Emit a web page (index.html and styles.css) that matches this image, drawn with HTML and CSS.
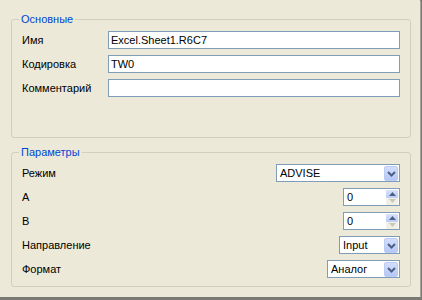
FILE: index.html
```html
<!DOCTYPE html>
<html lang="ru">
<head>
  <meta charset="UTF-8" />
  <title>Свойства тега</title>
  <link rel="stylesheet" href="styles.css">
</head>
<body>
  <div class="panel">
    <fieldset class="group group-main">
      <legend>Основные</legend>
      <div class="form-row">
        <label>Имя</label>
        <input class="text" type="text" value="Excel.Sheet1.R6C7" />
      </div>
      <div class="form-row">
        <label>Кодировка</label>
        <input class="text" type="text" value="TW0" />
      </div>
      <div class="form-row">
        <label>Комментарий</label>
        <input class="text" type="text" value="" />
      </div>
    </fieldset>

    <fieldset class="group group-params">
      <legend>Параметры</legend>
      <div class="param-row">
        <span>Режим</span>
        <div class="combo combo-mode">
          <span class="combo-value">ADVISE</span>
          <span class="combo-btn">
            <svg width="9" height="6" viewBox="0 0 9 6"><path d="M1 1 L4.5 4.5 L8 1" fill="none" stroke="#4d6185" stroke-width="2"/></svg>
          </span>
        </div>
      </div>
      <div class="param-row">
        <span>A</span>
        <div class="spin">
          <span class="spin-value">0</span>
          <span class="spin-btns">
            <span class="spin-up"><svg width="7" height="4" viewBox="0 0 7 4"><path d="M0 4 L3.5 0 L7 4 Z" fill="#4d6185"/></svg></span>
            <span class="spin-down"><svg width="7" height="4" viewBox="0 0 7 4"><path d="M0 0 L3.5 4 L7 0 Z" fill="#c9c7ba"/></svg></span>
          </span>
        </div>
      </div>
      <div class="param-row">
        <span>B</span>
        <div class="spin">
          <span class="spin-value">0</span>
          <span class="spin-btns">
            <span class="spin-up"><svg width="7" height="4" viewBox="0 0 7 4"><path d="M0 4 L3.5 0 L7 4 Z" fill="#4d6185"/></svg></span>
            <span class="spin-down"><svg width="7" height="4" viewBox="0 0 7 4"><path d="M0 0 L3.5 4 L7 0 Z" fill="#c9c7ba"/></svg></span>
          </span>
        </div>
      </div>
      <div class="param-row">
        <span>Направление</span>
        <div class="combo combo-dir">
          <span class="combo-value">Input</span>
          <span class="combo-btn">
            <svg width="9" height="6" viewBox="0 0 9 6"><path d="M1 1 L4.5 4.5 L8 1" fill="none" stroke="#4d6185" stroke-width="2"/></svg>
          </span>
        </div>
      </div>
      <div class="param-row">
        <span>Формат</span>
        <div class="combo combo-format">
          <span class="combo-value">Аналог</span>
          <span class="combo-btn">
            <svg width="9" height="6" viewBox="0 0 9 6"><path d="M1 1 L4.5 4.5 L8 1" fill="none" stroke="#4d6185" stroke-width="2"/></svg>
          </span>
        </div>
      </div>
    </fieldset>
  </div>
</body>
</html>
```

FILE: styles.css
```css
html {
  background: #7b7a72;
}
body {
  margin: 0;
  font-family: "Liberation Sans", Arial, sans-serif;
  font-size: 11px;
  color: #000;
}
.panel {
  width: 420px;
  height: 297px;
  box-sizing: border-box;
  padding: 12px 9px 0 11px;
  background: #ece9d8;
  box-shadow: 1px 1px 0 #a6a496;
}
.group {
  margin: 0;
  padding: 5px 10px 0 10px;
  border: 1px solid #d0d0bf;
  border-radius: 3px;
  min-width: 0;
}
.group legend {
  padding: 0 2px;
  margin-left: -3px;
  line-height: 14px;
  color: #0046d5;
}
.group-main {
  padding-bottom: 40px;
}
.group-params {
  margin-top: 7px;
  padding-bottom: 8px;
}
.form-row {
  display: grid;
  grid-template-columns: 86px 1fr;
  align-items: center;
  height: 18px;
  margin-bottom: 6px;
}
.form-row:last-child {
  margin-bottom: 0;
}
.text {
  width: 100%;
  height: 18px;
  box-sizing: border-box;
  margin: 0;
  padding: 0 2px;
  border: 1px solid #7f9db9;
  background: #fff;
  font: inherit;
  color: #000;
  outline: none;
}
.param-row {
  display: flex;
  justify-content: space-between;
  align-items: center;
  height: 18px;
  margin-bottom: 6px;
}
.param-row:last-child {
  margin-bottom: 0;
}
.combo, .spin {
  display: flex;
  align-items: stretch;
  height: 18px;
  box-sizing: border-box;
  border: 1px solid #7f9db9;
  background: #fff;
  padding: 1px 1px 0 0;
}
.combo-value, .spin-value {
  flex: 1;
  padding-left: 3px;
  line-height: 15px;
}
.combo-mode { width: 124px; }
.combo-dir { width: 61px; }
.combo-format { width: 73px; }
.spin { width: 57px; }
.combo-btn {
  width: 14px;
  height: 15px;
  box-sizing: border-box;
  border: 1px solid #bccdf4;
  border-radius: 2px;
  background: linear-gradient(#d2defc, #b4c8f6);
  display: flex;
  align-items: center;
  justify-content: center;
}
.spin-btns {
  width: 12px;
  display: flex;
  flex-direction: column;
}
.spin-up, .spin-down {
  flex: 1;
  display: flex;
  align-items: center;
  justify-content: center;
  border-radius: 1px;
}
.spin-up {
  background: linear-gradient(#d6e1fc, #b9ccf7);
}
.spin-down {
  background: #f1efe6;
}
```
